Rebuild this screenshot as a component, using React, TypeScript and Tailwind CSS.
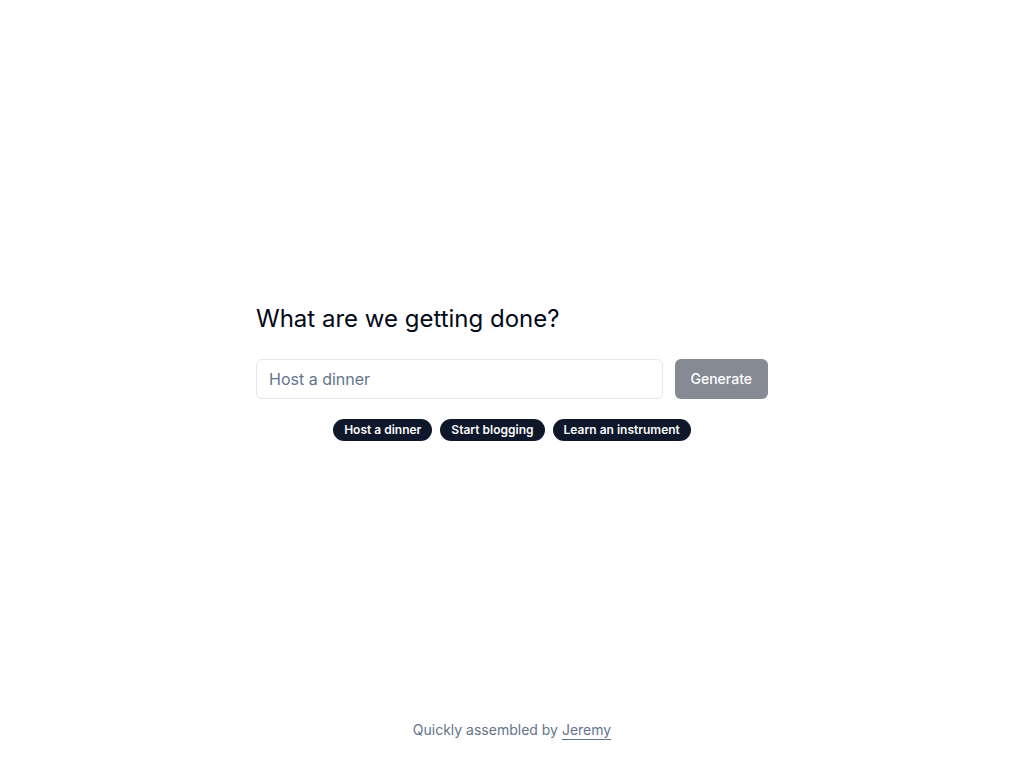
import React from "react";

export default function App() {
  const chips = ["Host a dinner", "Start blogging", "Learn an instrument"];
  return (
    <div
      className="min-h-screen flex flex-col bg-white text-[#020817]"
      style={{ fontFamily: "Inter, 'Noto Sans', sans-serif" }}
    >
      <main className="flex-1 flex justify-center pt-[303px]">
        <div className="w-[512px]">
          <h1 className="text-2xl leading-8 font-normal mb-6">What are we getting done?</h1>
          <div className="flex gap-3">
            <input
              className="flex-1 h-10 rounded-md border border-[#e2e8f0] px-3 py-2 text-base placeholder:text-[#64748b] outline-none"
              placeholder="Host a dinner"
            />
            <button
              disabled
              className="h-10 px-4 rounded-md bg-[#0f172a] opacity-50 text-white text-sm font-medium"
            >
              Generate
            </button>
          </div>
          <div className="flex justify-center gap-2 mt-5">
            {chips.map((c) => (
              <span
                key={c}
                className="inline-flex items-center rounded-full border border-transparent bg-[#0f172a] px-2.5 py-0.5 text-xs font-semibold text-[#f8fafc]"
              >
                {c}
              </span>
            ))}
          </div>
        </div>
      </main>
      <footer className="flex justify-center pb-7 text-sm text-[#64748b]">
        <p>
          Quickly assembled by{" "}
          <a className="underline underline-offset-4" href="#">
            Jeremy
          </a>
        </p>
      </footer>
    </div>
  );
}
